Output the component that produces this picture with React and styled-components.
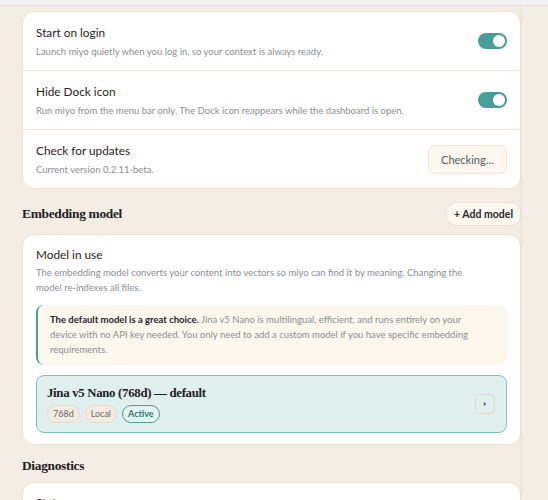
import React from 'react'
import styled, { createGlobalStyle } from 'styled-components'

const GlobalStyle = createGlobalStyle`
  html, body {
    margin: 0;
    padding: 0;
    background: #f4ede5;
    font-family: Lato, "Noto Sans", sans-serif;
    color: #222;
    overflow: hidden;
  }
`

const App = () => {
  return (
    <>
      <GlobalStyle />
      <TopStrip />
      <Layout>
        <Main>
          <Card>
            <Row>
              <RowText>
                <Title>Start on login</Title>
                <Desc>Launch miyo quietly when you log in, so your context is always ready.</Desc>
              </RowText>
              <Toggle $on />
            </Row>
            <Row>
              <RowText>
                <Title>Hide Dock icon</Title>
                <Desc>Run miyo from the menu bar only. The Dock icon reappears while the dashboard is open.</Desc>
              </RowText>
              <Toggle $on />
            </Row>
            <Row>
              <RowText>
                <Title>Check for updates</Title>
                <Desc>Current version 0.2.11-beta.</Desc>
              </RowText>
              <SoftButton>Checking…</SoftButton>
            </Row>
          </Card>

          <SectionHead>
            <SectionTitle>Embedding model</SectionTitle>
            <AddButton>+ Add model</AddButton>
          </SectionHead>

          <Card>
            <Block>
              <Title>Model in use</Title>
              <Desc $wrap>
                The embedding model converts your content into vectors so miyo can find it by meaning. Changing the model re-indexes all files.
              </Desc>
              <Callout>
                <strong>The default model is a great choice.</strong> Jina v5 Nano is multilingual, efficient, and runs entirely on your device with no API key needed. You only need to add a custom model if you have specific embedding requirements.
              </Callout>
              <ModelCard>
                <div>
                  <ModelName>Jina v5 Nano (768d) — default</ModelName>
                  <Badges>
                    <Badge>768d</Badge>
                    <Badge>Local</Badge>
                    <Badge $active>Active</Badge>
                  </Badges>
                </div>
                <ArrowButton>
                  <svg width="6" height="6" viewBox="0 0 6 6">
                    <path d="M1.8 1 L4.4 3 L1.8 5 Z" fill="#555a5e" />
                  </svg>
                </ArrowButton>
              </ModelCard>
            </Block>
          </Card>

          <SectionHead>
            <SectionTitle>Diagnostics</SectionTitle>
          </SectionHead>

          <Card>
            <Block>
              <Title>Status</Title>
            </Block>
          </Card>
        </Main>
        <Gutter />
      </Layout>
    </>
  )
}

export default App

const TopStrip = styled.div`
  height: 5px;
  background: #f1f2f3;
  border-bottom: 1px solid #e4e2de;
`
const Layout = styled.div`
  display: flex;
  height: 494px;
`
const Main = styled.div`
  width: 499px;
  padding: 5px 0 0 22px;
  border-right: 1px solid #e9dfd2;
`
const Gutter = styled.div`
  flex: 1;
  background: #f5eee6;
`
const Card = styled.div`
  background: #fff;
  border: 1px solid #eee3d3;
  border-radius: 12px;
  overflow: hidden;
`
const Row = styled.div`
  display: flex;
  align-items: center;
  justify-content: space-between;
  padding: 0 13px;
  height: 58px;
  & + & {
    border-top: 1px solid #efe6da;
  }
`
const RowText = styled.div`
  display: flex;
  flex-direction: column;
  gap: 4px;
`
const Title = styled.div`
  font-size: 11.8px;
  color: #1f2326;
  line-height: 16px;
`
const Desc = styled.div`
  font-size: 9.5px;
  color: #8b8d90;
  line-height: ${p => (p.$wrap ? '15px' : '13px')};
  margin-top: ${p => (p.$wrap ? '2px' : '0')};
  padding-right: ${p => (p.$wrap ? '24px' : '0')};
`
const Toggle = styled.div`
  width: 29px;
  height: 16px;
  border-radius: 8px;
  background: ${p => (p.$on ? '#4a9e99' : '#d8d2c8')};
  position: relative;
  &::after {
    content: '';
    position: absolute;
    top: 2px;
    left: ${p => (p.$on ? '15px' : '2px')};
    width: 12px;
    height: 12px;
    border-radius: 50%;
    background: #fff;
  }
`
const SoftButton = styled.div`
  width: 77px;
  height: 27px;
  display: flex;
  align-items: center;
  justify-content: center;
  background: #fcf8f0;
  border: 1px solid #efe6d8;
  border-radius: 7px;
  font-size: 11px;
  color: #55585c;
`
const SectionHead = styled.div`
  display: flex;
  align-items: center;
  justify-content: space-between;
  padding: 13px 0 8px;
`
const SectionTitle = styled.h2`
  margin: 0;
  font-family: "Liberation Serif", "DejaVu Serif", serif;
  font-weight: 700;
  font-size: 13.4px;
  letter-spacing: -0.3px;
  line-height: 16px;
  color: #1e2124;
`
const AddButton = styled.div`
  height: 22px;
  padding: 0 7px;
  display: flex;
  align-items: center;
  background: #fcf7ef;
  border: 1px solid #eee3d2;
  border-radius: 10px;
  font-size: 10.5px;
  font-weight: 700;
  color: #25282b;
`
const Block = styled.div`
  padding: 12px 13px 11px 13px;
`
const Callout = styled.div`
  margin-top: 10px;
  background: #fdf7ee;
  border-left: 2px solid #4a9e99;
  border-radius: 8px;
  padding: 7px 20px 8px 12px;
  font-size: 9.5px;
  line-height: 15px;
  color: #8b8d90;
  strong {
    color: #1f2326;
    font-weight: 700;
  }
`
const ModelCard = styled.div`
  margin-top: 10px;
  display: flex;
  align-items: center;
  justify-content: space-between;
  background: #dff0ef;
  border: 1.5px solid #7ec1bc;
  border-radius: 8px;
  padding: 9px 11px 9px 10px;
`
const ModelName = styled.div`
  font-family: "Liberation Serif", "DejaVu Serif", serif;
  font-weight: 700;
  font-size: 12.8px;
  letter-spacing: -0.3px;
  color: #1e2124;
  line-height: 17px;
`
const Badges = styled.div`
  display: flex;
  gap: 5px;
  margin-top: 3px;
`
const Badge = styled.span`
  font-size: 9px;
  line-height: 14px;
  padding: 1px 5px;
  border-radius: 9px;
  background: ${p => (p.$active ? '#e4f2f0' : '#f4ece2')};
  border: 1px solid ${p => (p.$active ? '#4a9e99' : '#e8dccb')};
  color: ${p => (p.$active ? '#2f7b75' : '#66696d')};
  font-weight: ${p => (p.$active ? 700 : 400)};
`
const ArrowButton = styled.div`
  width: 18px;
  height: 18px;
  border: 1.5px solid #e3d9c8;
  border-radius: 4px;
  display: flex;
  align-items: center;
  justify-content: center;
`
